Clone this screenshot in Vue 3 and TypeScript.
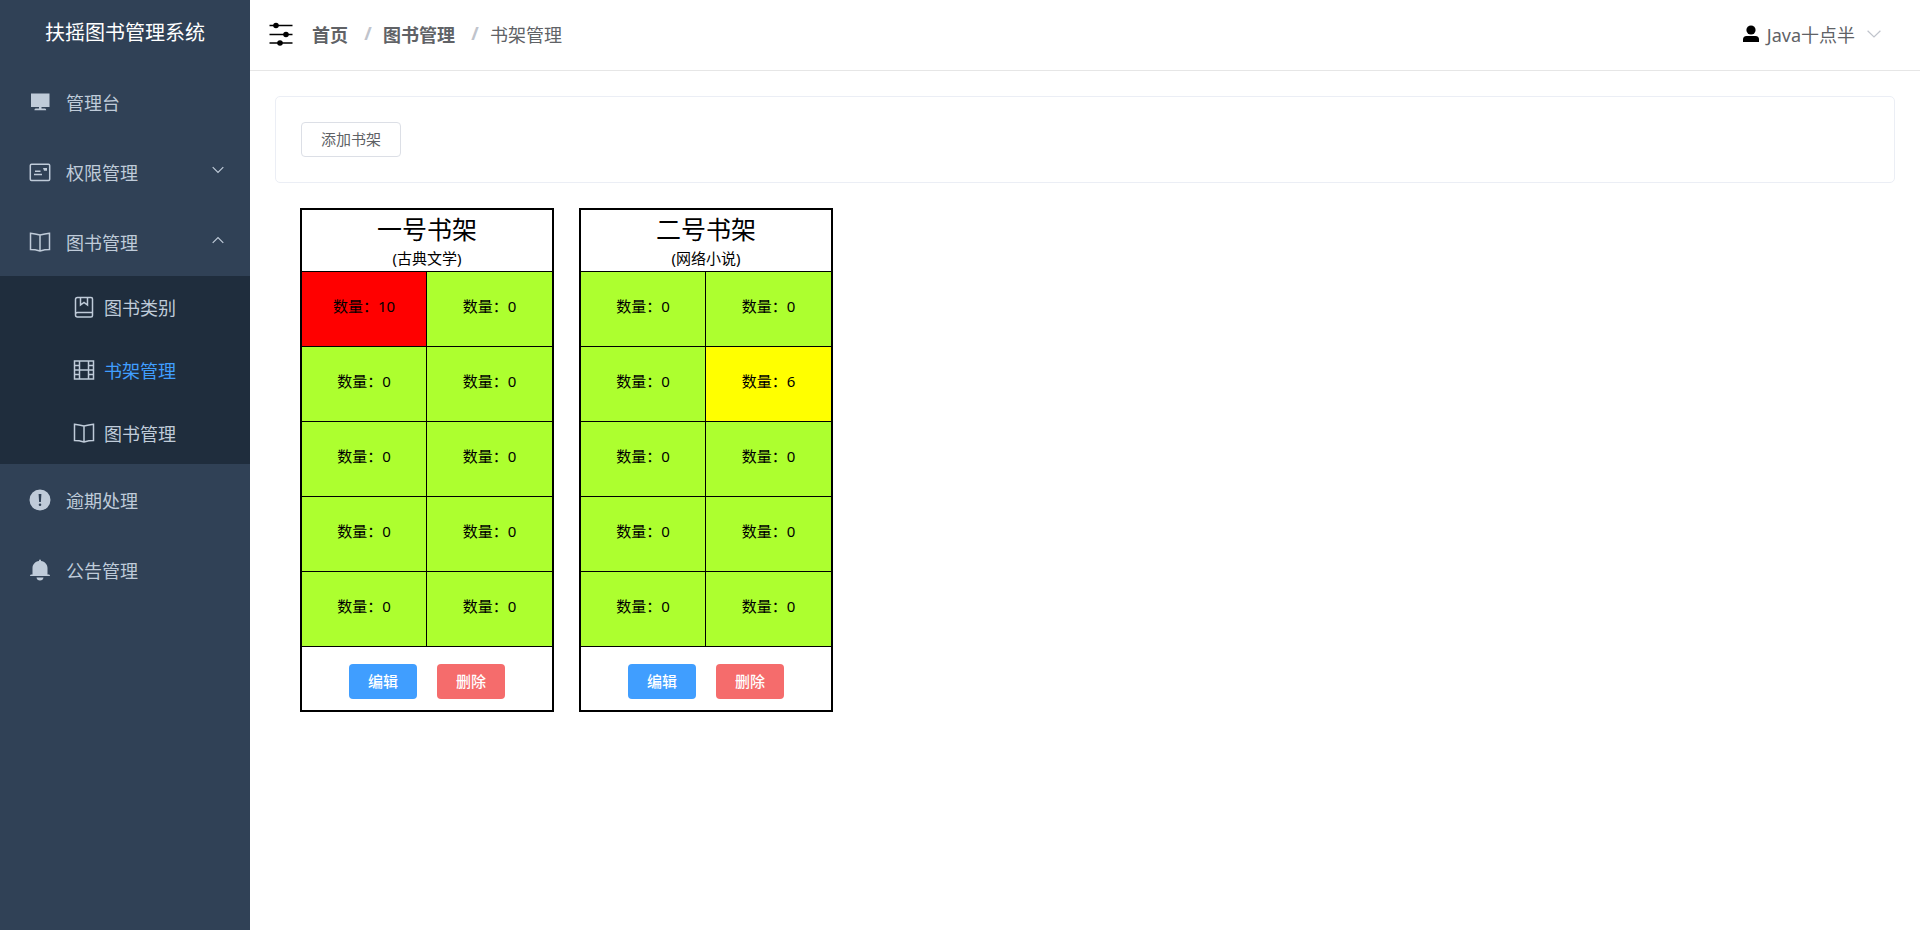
<script setup lang="ts">
import { ref } from 'vue'

type IconName = 'platform' | 'postcard' | 'reading' | 'notebook' | 'film' | 'warning' | 'bell'

interface MenuEntry {
  label: string
  icon: IconName
  children?: MenuEntry[]
}

interface Shelf {
  name: string
  category: string
  counts: number[]
}

const menu: MenuEntry[] = [
  { label: '管理台', icon: 'platform' },
  { label: '权限管理', icon: 'postcard', children: [] },
  {
    label: '图书管理',
    icon: 'reading',
    children: [
      { label: '图书类别', icon: 'notebook' },
      { label: '书架管理', icon: 'film' },
      { label: '图书管理', icon: 'reading' },
    ],
  },
  { label: '逾期处理', icon: 'warning' },
  { label: '公告管理', icon: 'bell' },
]

// 22 × 22 icon outlines: "fill" shapes are solid, "line" shapes are stroked.
const icons: Record<IconName, { fill?: string; line?: string }> = {
  platform: { fill: 'M2 2.500h18.500v13.500H2zM10 16h2.500v1.600h3.500q1.200 0 1.200 1.600H5.400q0-1.600 1.200-1.600H10z' },
  postcard: {
    line: 'M2.500 3.200h17q1.200 0 1.200 1.200v13.800q0 1.200-1.200 1.200h-17q-1.200 0-1.200-1.200v-13.800q0-1.200 1.200-1.200zM6 10.200h5.500M5 13.500h8',
    fill: 'M14 7h4v2.800h-3z',
  },
  reading: { line: 'M11 4Q6 2.600 1.500 2.200V18.600Q6 18.600 11 20Q16 18.600 20.500 18.600V2.200Q16 2.600 11 4zM11 4V20' },
  notebook: {
    line: 'M4.500 1.500h13.500q1.500 0 1.500 1.500v16.500q0 1.500-1.500 1.500h-13.500q-2 0-2-2v-15.500q0-2 2-2zM2.500 18.500q0-2 2-2h15M7.500 1.500v7.500l3.500-2.500l3.500 2.500v-7.500',
  },
  film: { line: 'M1.500 2h19v18h-19zM6.500 2v18M15.500 2v18M6.500 11h9M1.500 6.500h5M1.500 11h5M1.500 15.500h5M15.500 6.500h5M15.500 11h5M15.500 15.500h5' },
  warning: {
    fill: 'M11 .5a10.500 10.500 0 1 0 0 21a10.500 10.500 0 1 0 0-21zM9.600 5h2.800l-.5 8h-1.800zM11 14.400a1.300 1.300 0 1 1 0 2.600a1.300 1.300 0 1 1 0-2.600z',
  },
  bell: {
    fill: 'M10 2V1.500a1 1 0 0 1 2 0V2C16 2.500 18.500 5.500 18.500 9v6.500h1.500q1 0 1 1.500h-20q0-1.500 1-1.500H3.500V9C3.500 5.500 6 2.500 10 2zM7.500 18.500h7q-.4 3-3.500 3t-3.500-3z',
  },
}

const activeLabel = ref('书架管理')
const opened = ref(new Set<MenuEntry>([menu[2]]))

const shelves = ref<Shelf[]>([
  { name: '一号书架', category: '古典文学', counts: [10, 0, 0, 0, 0, 0, 0, 0, 0, 0] },
  { name: '二号书架', category: '网络小说', counts: [0, 0, 0, 6, 0, 0, 0, 0, 0, 0] },
])

function toggle(entry: MenuEntry): void {
  if (!entry.children) return
  if (!opened.value.delete(entry)) opened.value.add(entry)
}

function level(count: number): string {
  if (count >= 10) return 'full'
  return count > 5 ? 'busy' : 'free'
}
</script>

<template>
  <div class="page">
    <aside class="sidebar">
      <h1 class="brand">扶摇图书管理系统</h1>
      <nav>
        <template v-for="entry in menu" :key="entry.label">
          <button type="button" class="menu-item" @click="toggle(entry)">
            <svg class="menu-icon" viewBox="0 0 22 22" aria-hidden="true">
              <path v-if="icons[entry.icon].fill" class="solid" :d="icons[entry.icon].fill" />
              <path v-if="icons[entry.icon].line" class="line" :d="icons[entry.icon].line" />
            </svg>
            <span>{{ entry.label }}</span>
            <svg
              v-if="entry.children"
              class="arrow"
              :class="{ up: opened.has(entry) }"
              viewBox="0 0 12 8"
              aria-hidden="true"
            >
              <path class="line" d="M.7 1.200L6 6.500L11.300 1.200" />
            </svg>
          </button>
          <div v-if="entry.children?.length && opened.has(entry)" class="submenu">
            <button
              v-for="child in entry.children"
              :key="child.label"
              type="button"
              class="sub-item"
              @click="activeLabel = child.label"
            >
              <svg class="menu-icon" viewBox="0 0 22 22" aria-hidden="true">
                <path class="line" :d="icons[child.icon].line" />
              </svg>
              <span :class="{ active: child.label === activeLabel }">{{ child.label }}</span>
            </button>
          </div>
        </template>
      </nav>
    </aside>

    <div class="content">
      <header class="topbar">
        <button type="button" class="fold" aria-label="折叠菜单">
          <svg viewBox="0 0 24 24" aria-hidden="true">
            <path d="M.5 3.500h23M.5 12.500h23M.5 21h23" />
            <circle cx="7" cy="3.500" r="2" />
            <circle cx="17" cy="12.500" r="2" />
            <circle cx="11" cy="21" r="2" />
          </svg>
        </button>
        <nav class="crumbs" aria-label="面包屑">
          <a href="#">首页</a>
          <span class="slash">/</span>
          <a href="#">图书管理</a>
          <span class="slash">/</span>
          <span>书架管理</span>
        </nav>
        <button type="button" class="user">
          <svg class="avatar" viewBox="0 0 16 18" aria-hidden="true">
            <circle cx="8" cy="5" r="4.600" />
            <path d="M0 17v-2.500Q0 11 3.500 11h9Q16 11 16 14.500V17z" />
          </svg>
          <span>Java十点半</span>
          <svg class="caret" viewBox="0 0 14 8" aria-hidden="true">
            <path d="M.6 .8L7 7L13.400 .8" />
          </svg>
        </button>
      </header>

      <main>
        <section class="toolbar">
          <button type="button" class="btn plain">添加书架</button>
        </section>
        <div class="shelves">
          <article v-for="shelf in shelves" :key="shelf.name" class="shelf">
            <header class="shelf-head">
              <h2>{{ shelf.name }}</h2>
              <p>({{ shelf.category }})</p>
            </header>
            <div class="slots">
              <div v-for="(count, i) in shelf.counts" :key="i" class="slot" :class="level(count)">
                数量：{{ count }}
              </div>
            </div>
            <footer class="shelf-foot">
              <button type="button" class="btn edit">编辑</button>
              <button type="button" class="btn remove">删除</button>
            </footer>
          </article>
        </div>
      </main>
    </div>
  </div>
</template>

<style>
body {
  margin: 0;
  background: #fff;
}
</style>

<style scoped>
.page {
  display: flex;
  min-height: 100vh;
  font-family: 'Noto Sans', 'Noto Sans CJK SC', sans-serif;
  font-size: 15px;
  color: #000;
}

button {
  margin: 0;
  border: 0;
  background: none;
  font: inherit;
  color: inherit;
  cursor: pointer;
}

.sidebar {
  flex: 0 0 250px;
  background: #304156;
  color: #bfcbd9;
  font-size: 18px;
}

.brand {
  margin: 0;
  height: 66px;
  line-height: 66px;
  text-align: center;
  font-size: 20px;
  font-weight: 400;
  color: #fff;
}

.menu-item,
.sub-item {
  display: flex;
  align-items: center;
  width: 100%;
  text-align: left;
}

.menu-item {
  height: 70px;
  padding: 2px 26px 0 29px;
  gap: 15px;
}

.menu-icon {
  width: 22px;
  height: 22px;
}

.solid {
  fill: currentColor;
  fill-rule: evenodd;
}

.line {
  fill: none;
  stroke: currentColor;
  stroke-width: 1.5;
}

.arrow {
  width: 12px;
  height: 8px;
  margin: 0 0 5px auto;
}

.arrow .line {
  stroke-width: 1.2;
}

.arrow.up {
  transform: rotate(180deg);
}

.submenu {
  display: grid;
  grid-auto-rows: 1fr;
  height: 188px;
  background: #1f2d3d;
}

.sub-item {
  padding: 0 25px 0 73px;
  gap: 9px;
}

.active {
  color: #409eff;
}

.content {
  flex: 1;
  min-width: 0;
}

.topbar {
  display: flex;
  align-items: center;
  box-sizing: border-box;
  height: 71px;
  padding: 0 39px 3px 19px;
  border-bottom: 1px solid #e6e6e6;
  font-size: 18px;
  color: #606266;
}

.fold {
  padding: 0;
  width: 24px;
  height: 24px;
  color: #000;
}

.fold svg {
  display: block;
  stroke: currentColor;
  stroke-width: 1.6;
}

.crumbs {
  display: flex;
  margin-left: 19px;
}

.crumbs a {
  color: inherit;
  font-weight: 700;
  text-decoration: none;
}

.slash {
  box-sizing: border-box;
  width: 35px;
  padding-left: 5px;
  text-align: center;
  font-weight: 700;
  color: #c0c4cc;
}

.user {
  display: flex;
  align-items: center;
  margin-left: auto;
  padding: 0;
}

.avatar {
  width: 16px;
  height: 18px;
  margin-right: 8px;
  fill: #000;
}

.caret {
  width: 14px;
  height: 8px;
  margin-left: 12px;
  fill: none;
  stroke: #c0c4cc;
  stroke-width: 1.2;
}

main {
  padding: 25px;
}

.toolbar {
  padding: 25px;
  border: 1px solid #ebeef5;
  border-radius: 5px;
}

.btn {
  height: 35px;
  padding: 0 19px;
  border-radius: 4px;
  line-height: 33px;
}

.plain {
  display: block;
  border: 1px solid #dcdfe6;
  color: #606266;
  background: #fff;
}

.shelves {
  display: flex;
  flex-wrap: wrap;
  gap: 25px;
  padding: 25px;
}

.shelf {
  width: 250px;
  border: 2px solid #000;
}

.shelf-head {
  height: 61px;
  text-align: center;
  border-bottom: 1px solid #000;
}

.shelf-head h2 {
  margin: 0;
  font-size: 25px;
  line-height: 38px;
  font-weight: 400;
}

.shelf-head p {
  margin: 0;
  line-height: 20px;
}

.slots {
  display: grid;
  grid-template-columns: 1fr 1fr;
}

.slot {
  height: 74px;
  line-height: 68px;
  text-align: center;
  border-bottom: 1px solid #000;
}

.slot:nth-child(odd) {
  border-right: 1px solid #000;
}

.free {
  background: #adff2f;
}

.busy {
  background: #ff0;
}

.full {
  background: #f00;
}

.shelf-foot {
  display: flex;
  justify-content: center;
  gap: 20px;
  padding: 17px 0 11px;
}

.edit,
.remove {
  color: #fff;
  font-weight: 500;
}

.edit {
  background: #409eff;
}

.remove {
  background: #f56c6c;
}
</style>
